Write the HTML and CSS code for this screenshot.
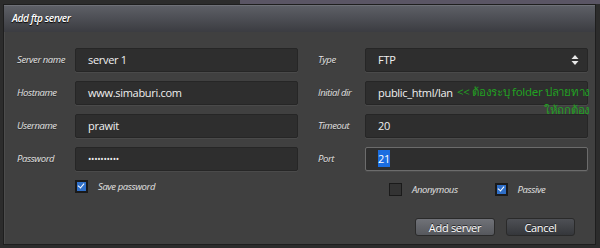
FILE: index.html
```html
<!DOCTYPE html>
<html lang="th">
<head>
  <meta charset="UTF-8" />
  <title>Add ftp server</title>
  <link rel="stylesheet" href="styles.css">
</head>
<body>

<div class="backdrop-strip"></div>

<div class="dialog">
  <div class="dialog-header">Add ftp server</div>

  <div class="dialog-body">
    <div class="form-grid">
      <label class="field-label">Server name</label>
      <div class="text-input">server 1</div>
      <label class="field-label">Type</label>
      <div class="text-input select-input">
        FTP
        <svg class="select-arrows" viewBox="0 0 8 12" width="8" height="12">
          <path fill="#e8e8e8" d="M4 1L7.5 5H0.5z"/>
          <path fill="#e8e8e8" d="M4 11L0.5 7H7.5z"/>
        </svg>
      </div>

      <label class="field-label">Hostname</label>
      <div class="text-input">www.simaburi.com</div>
      <label class="field-label">Initial dir</label>
      <div class="text-input note-holder">
        public_html/lan
        <span class="note">&lt;&lt; ต้องระบุ folder ปลายทาง ให้ถูกต้อง</span>
      </div>

      <label class="field-label">Username</label>
      <div class="text-input">prawit</div>
      <label class="field-label">Timeout</label>
      <div class="text-input">20</div>

      <label class="field-label">Password</label>
      <div class="text-input password">&bull;&bull;&bull;&bull;&bull;&bull;&bull;&bull;&bull;&bull;</div>
      <label class="field-label">Port</label>
      <div class="text-input focused"><span class="selected-text">21</span></div>

      <div></div>
      <div class="check-row">
        <span class="checkbox checked"></span>
        <span class="check-label">Save password</span>
      </div>
      <div></div>
      <div class="check-row right-checks">
        <span class="checkbox"></span>
        <span class="check-label">Anonymous</span>
        <span class="checkbox checked passive-box"></span>
        <span class="check-label">Passive</span>
      </div>
    </div>

    <div class="button-row">
      <button class="btn btn-primary">Add server</button>
      <button class="btn btn-cancel">Cancel</button>
    </div>
  </div>
</div>

</body>
</html>
```

FILE: styles.css
```css
body {
  margin: 0;
  padding: 0;
  width: 600px;
  height: 248px;
  overflow: hidden;
  background-color: #2c2c2c;
  font-family: "Open Sans", "Noto Sans", sans-serif;
  color: #e6e6e6;
}

.backdrop-strip {
  height: 4px;
  margin-left: 240px;
  background-color: #5a5564;
}

.dialog {
  margin-left: 3px;
  width: 593px;
  height: 241px;
  background-color: #404040;
  border: 1px solid #1e1e1e;
  box-sizing: border-box;
  box-shadow: inset 1px 0 0 #4c4c4c;
}

.dialog-header {
  height: 26px;
  padding-left: 8px;
  line-height: 25px;
  font-size: 10px;
  font-style: italic;
  font-weight: 600;
  letter-spacing: -0.4px;
  color: #ffffff;
  text-shadow: 0 1px 1px #000;
  background: linear-gradient(#5d5f66, #3b3c41);
  border-top: 1px solid #6e7077;
}

.dialog-body {
  padding: 16px 0 0 13px;
}

.form-grid {
  display: grid;
  grid-template-columns: 58px 223px 67px 223px;
  grid-auto-rows: 24px;
  row-gap: 9px;
}

.form-grid > :nth-child(4n+3) {
  margin-left: 20px;
}

.field-label {
  font-size: 9.5px;
  font-style: italic;
  letter-spacing: -0.4px;
  color: #e2e2e2;
  line-height: 24px;
  text-shadow: 0 1px 0 #2a2a2a;
}

.text-input {
  position: relative;
  box-sizing: border-box;
  height: 24px;
  padding-left: 12px;
  line-height: 22px;
  font-size: 11px;
  letter-spacing: -0.3px;
  color: #f0f0f0;
  background-color: #2e2e2e;
  border: 1px solid #262626;
  border-radius: 2px;
  box-shadow: 0 1px 0 #4a4a4a;
}

.focused {
  border-color: #6c6c6c;
}

.selected-text {
  background-color: #1b6de0;
  color: #fff;
  padding: 1px 0;
}

.password {
  font-size: 9px;
  letter-spacing: -0.3px;
}

.select-arrows {
  position: absolute;
  right: 8px;
  top: 5px;
}

.note {
  position: absolute;
  left: 90px;
  top: 1px;
  width: 134px;
  text-align: right;
  font-family: "Noto Sans", "DejaVu Sans", sans-serif;
  font-size: 11.5px;
  line-height: 18px;
  letter-spacing: -0.3px;
  color: #22a022;
}

.check-row {
  display: flex;
  align-items: flex-start;
  height: 24px;
}

.check-row > * {
  margin-top: 0;
}

.check-row .check-label {
  line-height: 13px;
}

.right-checks {
  padding-top: 3px;
  padding-left: 24px;
}

.checkbox {
  flex: none;
  width: 13px;
  height: 13px;
  box-sizing: border-box;
  background-color: #333;
  border: 1px solid #1a1a1a;
  position: relative;
}

.checkbox.checked {
  background-color: #2f6fc8;
  border: 2px solid #1a1a1a;
}

.checkbox.checked::after {
  content: "";
  position: absolute;
  left: 2px;
  top: 0px;
  width: 3px;
  height: 5px;
  border: solid #fff;
  border-width: 0 1.5px 1.5px 0;
  transform: rotate(40deg);
}

.check-label {
  margin-left: 10px;
  font-size: 9.5px;
  font-style: italic;
  letter-spacing: -0.4px;
  color: #e0e0e0;
}

.passive-box {
  margin-left: 37px;
}

.button-row {
  display: flex;
  justify-content: flex-end;
  gap: 11px;
  padding-right: 20px;
  margin-top: 14px;
}

.btn {
  height: 18px;
  padding: 0;
  font-family: "Open Sans", "Noto Sans", sans-serif;
  font-size: 11px;
  letter-spacing: -0.3px;
  color: #fff;
  border: 1px solid #2a2a2a;
  border-radius: 3px;
  text-shadow: 0 -1px 0 #222;
}

.btn-primary {
  width: 80px;
  background: linear-gradient(#707278, #56585d);
}

.btn-cancel {
  width: 69px;
  background: linear-gradient(#4e5055, #35373b);
}
```
